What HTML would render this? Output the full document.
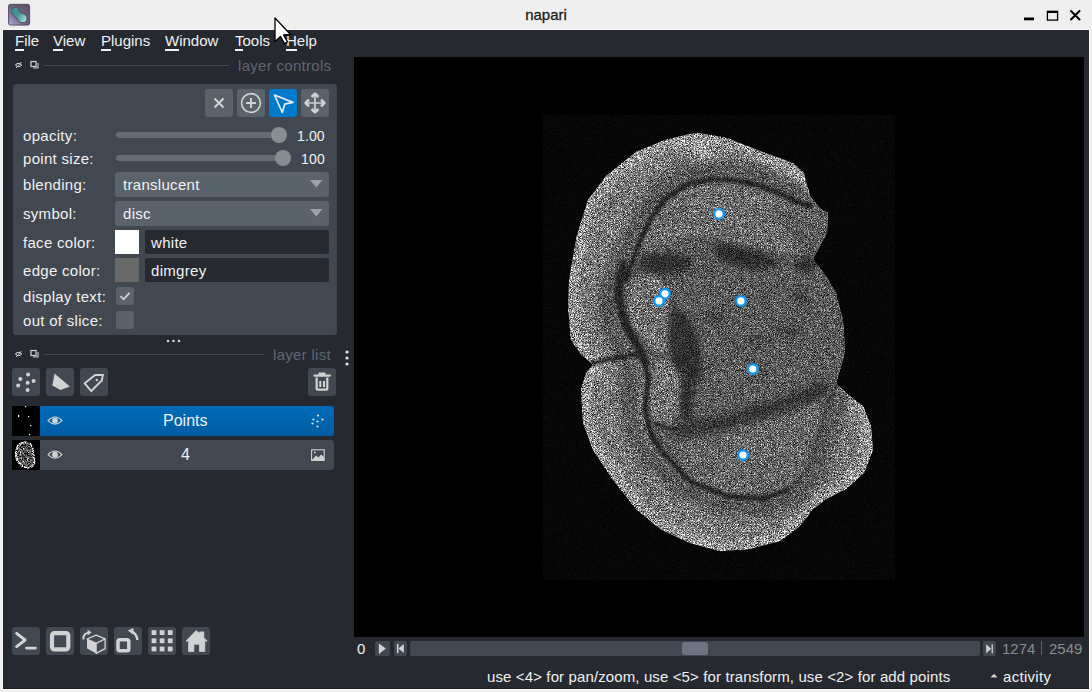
<!DOCTYPE html>
<html><head><meta charset="utf-8">
<style>
*{box-sizing:border-box;margin:0;padding:0}
html,body{width:1092px;height:692px;overflow:hidden;background:#efefef;font-family:"Liberation Sans",sans-serif;}
.a{position:absolute}
.t{position:absolute;white-space:nowrap;line-height:15px;font-size:15px;letter-spacing:0.3px}
.menu{color:#f0f1f2;top:33px;letter-spacing:0}
.menu u{text-decoration:none;border-bottom:2px solid #f0f1f2;padding-bottom:0px}
.btn{position:absolute;background:#414851;border-radius:3px}
.lbl{color:#f0f1f2;left:23px}
.combo{position:absolute;background:#5a626c;border-radius:3px}
.field{position:absolute;background:#262930;border-radius:2px}
svg{position:absolute;overflow:visible}
</style></head><body>
<!-- title bar -->
<svg style="left:8px;top:4px" width="22" height="22" viewBox="0 0 22 22">
<defs><linearGradient id="ig" x1="0" y1="1" x2="1" y2="0"><stop offset="0" stop-color="#b4acdc"/><stop offset="0.45" stop-color="#6e6384"/><stop offset="1" stop-color="#5f5068"/></linearGradient>
<linearGradient id="ig2" x1="0" y1="0" x2="1" y2="0.6"><stop offset="0" stop-color="#2f9ea4"/><stop offset="0.5" stop-color="#4b8d92"/><stop offset="1" stop-color="#8edcdc"/></linearGradient></defs>
<rect x="0.6" y="0.3" width="21" height="20.8" rx="2" fill="url(#ig)" stroke="#4a4058" stroke-width="0.9"/>
<path d="M3.6 7.2 C3.6 4.6 5.5 3.3 7.8 3.3 C10 3.3 11 5 11.3 7 C11.6 8.5 12.5 9.2 14.5 9.5 C17.3 9.9 19 12 19 14.8 C19 17.3 17 18.8 14.5 18.8 C12.3 18.8 11 17.6 10 15.8 C9 14 7.5 13.3 5.8 11.8 C4.5 10.6 3.6 9 3.6 7.2 Z" fill="url(#ig2)" stroke="#3a3344" stroke-width="1"/>
<path d="M3.6 7.2 C3.6 4.6 5.5 3.3 7.8 3.3 C10 3.3 11 5 11.3 7 C11.6 8.5 12.5 9.2 14.5 9.5 C17.3 9.9 19 12 19 14.8 C19 17.3 17 18.8 14.5 18.8 C12.3 18.8 11 17.6 10 15.8 C9 14 7.5 13.3 5.8 11.8 C4.5 10.6 3.6 9 3.6 7.2 Z" fill="none" stroke="#b8a070" stroke-width="0.4" opacity="0.8"/>
</svg>
<div class="t" style="left:0;width:1092px;text-align:center;top:7px;font-size:15px;letter-spacing:0;color:#1e1e1e;-webkit-text-stroke:0.3px #1e1e1e">napari</div>
<svg style="left:1020px;top:8px" width="66" height="16" viewBox="0 0 66 16">
<rect x="4" y="9.5" width="10" height="2.8" fill="#000"/>
<rect x="27.4" y="3.5" width="10.2" height="8.6" fill="none" stroke="#000" stroke-width="1.3"/>
<rect x="27" y="2.8" width="11" height="2.2" fill="#000"/>
<path d="M51 3 L59.5 11.5 M59.5 3 L51 11.5" stroke="#000" stroke-width="2.1" stroke-linecap="round"/>
</svg>
<div class="a" style="left:3px;top:30px;width:1086px;height:659px;background:#262930;border-left:1px solid #1d2027;border-bottom:1px solid #1d2027;box-shadow:0 0 0 1px #fafafa"></div>
<!-- menus -->
<div class="t menu" style="left:15px"><u>F</u>ile</div>
<div class="t menu" style="left:53px"><u>V</u>iew</div>
<div class="t menu" style="left:101px"><u>P</u>lugins</div>
<div class="t menu" style="left:165px"><u>W</u>indow</div>
<div class="t menu" style="left:235px"><u>T</u>ools</div>
<div class="t menu" style="left:286px"><u>H</u>elp</div>

<!-- canvas -->
<div class="a" style="left:354px;top:57px;width:730px;height:580px;background:#000"></div>
<div id="brain"><svg style="left:0;top:0" width="1092" height="692" viewBox="0 0 1092 692">
<defs>
<filter id="bl2" x="-20%" y="-20%" width="140%" height="140%"><feGaussianBlur stdDeviation="2"/></filter>
<filter id="bl3" x="-20%" y="-20%" width="140%" height="140%"><feGaussianBlur stdDeviation="3"/></filter>
<filter id="bl5" x="-30%" y="-30%" width="160%" height="160%"><feGaussianBlur stdDeviation="5"/></filter>
<filter id="tex" x="540" y="110" width="360" height="475" filterUnits="userSpaceOnUse" color-interpolation-filters="sRGB">
<feTurbulence type="fractalNoise" baseFrequency="1.3" numOctaves="1" seed="7" result="n"/>
<feColorMatrix in="n" type="matrix" values="1 0 0 0 0  1 0 0 0 0  1 0 0 0 0  0 0 0 0 1" result="g"/>
<feComponentTransfer in="g" result="c1"><feFuncR type="linear" slope="1.7" intercept="-0.42"/><feFuncG type="linear" slope="1.7" intercept="-0.42"/><feFuncB type="linear" slope="1.7" intercept="-0.42"/></feComponentTransfer>
<feColorMatrix in="n" type="matrix" values="0 1 0 0 0  0 1 0 0 0  0 1 0 0 0  0 0 0 0 1" result="g2"/>
<feComponentTransfer in="g2" result="c2"><feFuncR type="linear" slope="5" intercept="-3.0"/><feFuncG type="linear" slope="5" intercept="-3.0"/><feFuncB type="linear" slope="5" intercept="-3.0"/></feComponentTransfer>
<feComposite in="c1" in2="c2" operator="arithmetic" k1="0" k2="1" k3="1" k4="0" result="c"/>
<feComposite in="SourceGraphic" in2="c" operator="arithmetic" k1="2.0" k2="0" k3="0" k4="0"/>
</filter>
<clipPath id="sil"><path d="M700,133 L727,138 L760,151 L793,163 L804,173 L810,196 L820,208 L828,213 L827,233 L820,246 L813,259 L826,276 L836,293 L843,320 L845,350 L843,360 L836,383 L846,393 L863,406 L871,426 L873,450 L864,473 L846,489 L826,499 L813,509 L800,526 L780,541 L750,549 L720,551 L690,543 L660,529 L636,509 L613,480 L593,450 L583,423 L581,390 L586,373 L593,365 L580,353 L571,340 L568,306 L569,280 L577,235 L588,200 L606,176 L636,152 L665,140 L690,134 Z"/></clipPath>
</defs>
<g filter="url(#tex)">
<rect x="543" y="115" width="352" height="465" fill="#070707"/>
<g clip-path="url(#sil)">
<rect x="540" y="110" width="360" height="475" fill="#808080"/>
<path filter="url(#bl3)" d="M700,133 L727,138 L760,151 L793,163 L804,173 L810,196 M836,383 L846,393 L863,406 L871,426 L873,450 L864,473 L846,489 L826,499 L813,509 L800,526 L780,541 L750,549 L720,551 L690,543 L660,529 L636,509 L613,480 L593,450 L583,423 L581,390 L586,373 L593,365 L580,353 L571,340 L568,306 L569,280 L577,235 L588,200 L606,176 L636,152 L665,140 L690,134 Z" fill="none" stroke="#a2a2a2" stroke-width="20"/>
<!-- inner cortex darker layer -->
<path filter="url(#bl5)" d="M808,197 L795,193 L776,183 L752,175 L732,171 L709,170 L683,175 L657,192 L642,214 L631,238 L621,260 L609,285 L606,305 L613,335 L627,360 L631,382 L629,410 L636,440 L652,464 L684,490 L724,505 L765,508 L796,497 L816,476 L827,445 L838,403 L846,388" fill="none" stroke="#5a5a5a" stroke-width="18" stroke-linejoin="round"/>
<!-- inner region (inside cortex) -->
<path filter="url(#bl2)" d="M811,206 L797,202 L777,192 L753,184 L733,180 L711,179 L687,184 L664,200 L650,220 L640,241 L632,262 L624,285 L620,300 L626,325 L640,352 L646,380 L645,410 L651,435 L663,453 L691,482 L727,496 L763,499 L791,489 L808,470 L818,441 L830,399 L839,382 L860,380 L860,200 Z" fill="#5e5e5e"/>
<!-- upper lens -->
<path filter="url(#bl2)" d="M640,252 L644,232 L652,218 L665,203 L687,188 L711,183 L733,184 L753,188 L777,196 L797,206 L812,212 L826,230 L818,248 L790,252 L765,250 L745,244 L717,238 L690,234 L660,246 Z" fill="#727272"/>
<path filter="url(#bl3)" d="M770,205 L826,222 L835,260 L800,250 Z" fill="#5e5e5e"/>
<!-- small lobe -->
<path filter="url(#bl2)" d="M643,275 L660,279 L667,289 L671,320 L671,350 L655,353 L636,331 L628,308 L630,284 Z" fill="#7a7a7a"/>
<!-- oval -->
<ellipse filter="url(#bl2)" cx="666" cy="392" rx="17" ry="32" fill="#7c7c7c"/>
<!-- bottom lobe -->
<path filter="url(#bl3)" d="M677,432 L715,428 L751,420 L787,408 L822,392 L818,441 L808,470 L791,489 L763,499 L727,496 L691,482 L680,458 Z" fill="#6c6c6c"/>
<!-- dark boundary lines -->
<filter id="bl15" x="-20%" y="-20%" width="140%" height="140%"><feGaussianBlur stdDeviation="1.5"/></filter>
<g filter="url(#bl15)" fill="none" stroke="#222" stroke-linecap="round" stroke-linejoin="round">
<path d="M811,206 L797,202 L777,192 L753,184 L733,180 L711,179 L687,184 L664,200 L650,220 L640,241 L632,262 L626,280" stroke-width="5"/>
<path d="M624,262 L619,296 L629,331 L643,355 L648,379 L645,410 L651,435 L663,453 L691,482 L727,496 L763,499 L791,489" stroke-width="5"/>
<path d="M622,270 L618,296 L625,325 L637,345 L645,362" stroke-width="9" stroke="#282828"/>
<path d="M791,489 L808,470 L818,441 L830,399 L839,382" stroke-width="4" stroke="#444"/>
<path d="M589,364 L620,357 L640,354" stroke-width="4"/>
<path d="M655,424 L672,430 L687,427" stroke-width="3"/>
</g>
<g filter="url(#bl3)" fill="#303030">
<path d="M722,243 L748,248 L770,254 L782,266 L752,270 L725,264 L712,252 Z"/>
<path d="M641,256 L670,252 L694,260 L686,272 L654,274 L639,268 Z"/>
<path d="M670,305 L690,318 L701,345 L701,382 L686,386 L672,362 L668,335 Z"/>
<ellipse cx="687" cy="399" rx="7" ry="25"/>
<ellipse cx="806" cy="265" rx="11" ry="8"/>
<ellipse cx="800" cy="296" rx="10" ry="6" opacity="0.6"/>
<ellipse cx="789" cy="332" rx="12" ry="6" opacity="0.6"/>
<ellipse cx="714" cy="318" rx="10" ry="6" opacity="0.5"/>
<ellipse cx="760" cy="340" rx="14" ry="5" opacity="0.4"/>
</g>
<path filter="url(#bl5)" d="M679,432 L715,425 L751,415 L787,404 L822,389" fill="none" stroke="#333" stroke-width="13" stroke-linecap="round"/>
</g>
</g>
<g stroke="#1196f2" stroke-width="2.4" fill="#fff"><circle cx="719" cy="213.9" r="4.8"/><circle cx="665" cy="293.8" r="4.8"/><circle cx="659" cy="300.9" r="4.8"/><circle cx="740.9" cy="300.9" r="4.8"/><circle cx="752.8" cy="369" r="4.8"/><circle cx="743" cy="455" r="4.8"/></g>
</svg></div>

<!-- layer controls header -->
<svg style="left:14px;top:60px" width="28" height="10" viewBox="0 0 28 10">
<path d="M1.5 5 Q4.5 1.5 7.5 5 Q4.5 8.5 1.5 5Z" fill="none" stroke="#d1d2d4" stroke-width="1.1"/><path d="M2 8 L7.5 2" stroke="#d1d2d4" stroke-width="0.9"/>
<rect x="17" y="1.5" width="5" height="5" fill="none" stroke="#d1d2d4" stroke-width="1.2"/><path d="M19 8 H24 V3" fill="none" stroke="#d1d2d4" stroke-width="1.1"/>
</svg>
<div class="a" style="left:44px;top:65px;width:185px;height:1px;background:#414851"></div>
<div class="t" style="left:238px;top:58px;color:#5f6872">layer controls</div>
<!-- controls box -->
<div class="a" style="left:13px;top:84px;width:324px;height:251px;background:#414851;border-radius:3px"></div>
<div class="btn" style="left:205px;top:89px;width:28px;height:28px;background:#5a626c"></div>
<div class="btn" style="left:237px;top:89px;width:28px;height:28px;background:#5a626c"></div>
<div class="btn" style="left:269px;top:89px;width:28px;height:28px;background:#007acc"></div>
<div class="btn" style="left:301px;top:89px;width:28px;height:28px;background:#5a626c"></div>
<svg style="left:205px;top:89px" width="124" height="28" viewBox="0 0 124 28">
<path d="M9.5 9.5 L18.5 18.5 M18.5 9.5 L9.5 18.5" stroke="#d1d2d4" stroke-width="1.9"/>
<circle cx="46" cy="14" r="9.4" fill="none" stroke="#d1d2d4" stroke-width="1.6"/>
<path d="M46 9 V19 M41 14 H51" stroke="#d1d2d4" stroke-width="1.9"/>
<path d="M69.5 6 L88 13.4 L79.7 15.2 L77.3 23.5 Z" fill="none" stroke="#e8e9ea" stroke-width="1.7" stroke-linejoin="round"/>
<path d="M110 5 V23 M101 14 H119" stroke="#d1d2d4" stroke-width="1.7"/>
<path d="M106.6 8 L110 4.6 L113.4 8 M106.6 20 L110 23.4 L113.4 20 M104 10.6 L100.6 14 L104 17.4 M116 10.6 L119.4 14 L116 17.4" fill="none" stroke="#d1d2d4" stroke-width="2.6" stroke-linecap="butt" stroke-linejoin="round"/>
</svg>

<div class="t lbl" style="top:128px">opacity:</div>
<div class="t lbl" style="top:151px">point size:</div>
<div class="t lbl" style="top:177px">blending:</div>
<div class="t lbl" style="top:206px">symbol:</div>
<div class="t lbl" style="top:235px">face color:</div>
<div class="t lbl" style="top:263px">edge color:</div>
<div class="t lbl" style="top:289px">display text:</div>
<div class="t lbl" style="top:313px">out of slice:</div>

<!-- sliders -->
<div class="a" style="left:116px;top:132px;width:166px;height:6px;background:#636c77;border-radius:3px"></div>
<div class="a" style="left:271px;top:127px;width:16px;height:16px;background:#868e93;border-radius:50%"></div>
<div class="t" style="left:297px;top:129px;font-size:14px;line-height:14px;letter-spacing:0.1px;color:#f0f1f2">1.00</div>
<div class="a" style="left:116px;top:155px;width:170px;height:6px;background:#636c77;border-radius:3px"></div>
<div class="a" style="left:275px;top:150px;width:16px;height:16px;background:#868e93;border-radius:50%"></div>
<div class="t" style="left:301px;top:152px;font-size:14px;line-height:14px;letter-spacing:0.2px;color:#f0f1f2">100</div>

<div class="combo" style="left:115px;top:172px;width:214px;height:25px"></div>
<div class="t" style="left:123px;top:177px;color:#f0f1f2">translucent</div>
<div class="combo" style="left:115px;top:201px;width:214px;height:25px"></div>
<div class="t" style="left:123px;top:206px;color:#f0f1f2">disc</div>
<svg style="left:310px;top:180px" width="13" height="40" viewBox="0 0 13 40">
<path d="M0 0 H12.5 L6.25 7.5Z M0 29 H12.5 L6.25 36.5Z" fill="#9da3a9"/>
</svg>
<div class="a" style="left:115px;top:230px;width:24px;height:24px;background:#fff"></div>
<div class="field" style="left:145px;top:230px;width:184px;height:24px"></div>
<div class="t" style="left:151px;top:235px;color:#f0f1f2">white</div>
<div class="a" style="left:115px;top:258px;width:24px;height:24px;background:#696969"></div>
<div class="field" style="left:145px;top:258px;width:184px;height:24px"></div>
<div class="t" style="left:151px;top:263px;color:#f0f1f2">dimgrey</div>
<div class="combo" style="left:116px;top:287px;width:18px;height:18px"></div>
<svg style="left:116px;top:287px" width="18" height="18" viewBox="0 0 18 18"><path d="M4.5 9.2 L7.6 12.3 L13.5 5.8" fill="none" stroke="#d1d2d4" stroke-width="1.8"/></svg>
<div class="combo" style="left:116px;top:311px;width:18px;height:18px"></div>

<!-- splitter dots -->
<svg style="left:166px;top:339px" width="16" height="4" viewBox="0 0 16 4"><circle cx="2" cy="2" r="1.3" fill="#d1d2d4"/><circle cx="7.5" cy="2" r="1.3" fill="#d1d2d4"/><circle cx="13" cy="2" r="1.3" fill="#d1d2d4"/></svg>

<!-- layer list header -->
<svg style="left:14px;top:349px" width="28" height="10" viewBox="0 0 28 10">
<path d="M1.5 5 Q4.5 1.5 7.5 5 Q4.5 8.5 1.5 5Z" fill="none" stroke="#d1d2d4" stroke-width="1.1"/><path d="M2 8 L7.5 2" stroke="#d1d2d4" stroke-width="0.9"/>
<rect x="17" y="1.5" width="5" height="5" fill="none" stroke="#d1d2d4" stroke-width="1.2"/><path d="M19 8 H24 V3" fill="none" stroke="#d1d2d4" stroke-width="1.1"/>
</svg>
<div class="a" style="left:44px;top:354px;width:220px;height:1px;background:#414851"></div>
<div class="t" style="left:273px;top:347px;color:#5f6872">layer list</div>
<svg style="left:344px;top:349px" width="6" height="18" viewBox="0 0 6 18"><circle cx="3" cy="3" r="1.6" fill="#e0e1e2"/><circle cx="3" cy="9" r="1.6" fill="#e0e1e2"/><circle cx="3" cy="15" r="1.6" fill="#e0e1e2"/></svg>

<div class="btn" style="left:12px;top:368px;width:28px;height:28px"></div>
<div class="btn" style="left:46px;top:368px;width:28px;height:28px"></div>
<div class="btn" style="left:80px;top:368px;width:28px;height:28px"></div>
<div class="btn" style="left:308px;top:368px;width:28px;height:28px"></div>
<svg style="left:12px;top:368px" width="324" height="28" viewBox="0 0 324 28">
<g fill="#d1d2d4"><circle cx="16.1" cy="6.5" r="2"/><circle cx="8.4" cy="10.9" r="2"/><circle cx="21.6" cy="13.1" r="2"/><circle cx="15.6" cy="14.7" r="2"/><circle cx="6.2" cy="17.5" r="2"/><circle cx="15.6" cy="21.9" r="2"/></g>
<path d="M42.5 5.4 L57.9 18.6 L48.5 21.9 L40.3 17.5 Z" fill="#d1d2d4"/>
<path d="M72.7 15.3 L83.2 7 L90.9 7 L89.8 12.5 L79.3 23 Z" fill="none" stroke="#d1d2d4" stroke-width="1.9" stroke-linejoin="miter"/>
<circle cx="84.8" cy="12" r="1.2" fill="#d1d2d4"/>
<path d="M302.5 7.6 H317.9 M307.5 5.7 H312.6" stroke="#d1d2d4" stroke-width="2.2" stroke-linecap="round"/>
<path d="M304.7 9.5 V20.3 Q304.7 21.7 306.1 21.7 H313.9 Q315.3 21.7 315.3 20.3 V9.5" fill="none" stroke="#d1d2d4" stroke-width="2.2"/>
<path d="M308.3 13 V19 M312 13 V19" stroke="#d1d2d4" stroke-width="2"/>
</svg>

<!-- layers -->
<div class="a" style="left:12px;top:406px;width:28px;height:30px;background:#000"></div>
<svg style="left:12px;top:406px" width="28" height="30" viewBox="0 0 28 30"><g fill="#fff"><rect x="13" y="0" width="1.2" height="1.2"/><rect x="6" y="9" width="1.3" height="2"/><rect x="16" y="10" width="1.2" height="1.2"/><rect x="18" y="19" width="1.2" height="1.2"/><rect x="17" y="28" width="1.2" height="1.2"/></g></svg>
<div class="a" style="left:40px;top:406px;width:294px;height:30px;background:linear-gradient(#006cb9,#005ca3);border-radius:0 3px 3px 0"></div>
<div class="a" style="left:12px;top:440px;width:28px;height:30px;background:#000"></div>
<svg style="left:12px;top:440px" width="28" height="30" viewBox="0 0 28 30">
<defs><filter id="tex2" x="0" y="0" width="28" height="30" filterUnits="userSpaceOnUse" color-interpolation-filters="sRGB">
<feTurbulence type="fractalNoise" baseFrequency="1.4" numOctaves="1" seed="3" result="n"/>
<feColorMatrix in="n" type="matrix" values="1 0 0 0 0  1 0 0 0 0  1 0 0 0 0  0 0 0 0 1" result="g"/>
<feComponentTransfer in="g" result="c"><feFuncR type="linear" slope="3" intercept="-1"/><feFuncG type="linear" slope="3" intercept="-1"/><feFuncB type="linear" slope="3" intercept="-1"/></feComponentTransfer>
<feComposite in="SourceGraphic" in2="c" operator="arithmetic" k1="2" k2="0" k3="0" k4="0"/></filter></defs>
<g filter="url(#tex2)"><rect x="0" y="0" width="28" height="30" fill="#000"/>
<path d="M12 2.5 C17 1.5 20.5 5 21 10 C21.5 13 21.3 15 22.5 19 C23.5 24 20 27.5 16 27.5 C10 27.5 5 23 4 16 C3 9 6 3.5 12 2.5Z" fill="#4a4a4a" stroke="#b8b8b8" stroke-width="1.8"/>
<path d="M10 9 C13 7 16 9 16 13 C16 17 17 21 14 22 C11 23 9 19 8.5 15 C8 12 8.5 10 10 9Z" fill="none" stroke="#888" stroke-width="1.4"/>
</g></svg>
<div class="a" style="left:40px;top:440px;width:294px;height:30px;background:#414851;border-radius:0 3px 3px 0"></div>
<svg style="left:40px;top:406px" width="294" height="64" viewBox="0 0 294 64">
<g fill="none" stroke="#d1d2d4" stroke-width="1.1"><path d="M8 14.6 Q15 7.5 22 14.6 Q15 21.7 8 14.6Z"/><path d="M8 48.6 Q15 41.5 22 48.6 Q15 55.7 8 48.6Z"/></g>
<circle cx="15" cy="14.6" r="2.9" fill="#d1d2d4"/><circle cx="15" cy="48.6" r="2.9" fill="#d1d2d4"/>
<g fill="#e6e7e8"><circle cx="278" cy="9.5" r="1.1"/><circle cx="273.5" cy="13.5" r="1.1"/><circle cx="282.5" cy="13.5" r="1.1"/><circle cx="277.5" cy="15.5" r="1.1"/><circle cx="272.5" cy="17.5" r="1.1"/><circle cx="277.5" cy="20.5" r="1.1"/></g>
<rect x="271.6" y="43.8" width="12.6" height="10.6" fill="none" stroke="#d1d2d4" stroke-width="1.1"/>
<path d="M272 54 L276 49.5 L278.5 51.5 L281 48.5 L284 51 V54Z" fill="#d1d2d4"/><circle cx="274.8" cy="46.5" r="0.9" fill="#d1d2d4"/>
</svg>
<div class="t" style="left:163px;top:413px;font-size:16px;line-height:16px;letter-spacing:0;color:#f0f1f2">Points</div>
<div class="t" style="left:181px;top:447px;font-size:16px;line-height:16px;color:#f0f1f2">4</div>

<!-- bottom buttons -->
<div class="btn" style="left:12px;top:627px;width:28px;height:28px"></div>
<div class="btn" style="left:46px;top:627px;width:28px;height:28px"></div>
<div class="btn" style="left:80px;top:627px;width:28px;height:28px"></div>
<div class="btn" style="left:114px;top:627px;width:28px;height:28px"></div>
<div class="btn" style="left:148px;top:627px;width:28px;height:28px"></div>
<div class="btn" style="left:182px;top:627px;width:28px;height:28px"></div>
<svg style="left:12px;top:627px" width="198" height="28" viewBox="0 0 198 28">
<g fill="none" stroke="#d1d2d4" stroke-linecap="round" stroke-linejoin="round">
<path d="M4.6 6.3 L13.1 13 L4.6 19.7" stroke-width="2.9"/>
<path d="M14.5 21.1 H23.4" stroke-width="2.9"/>
<rect x="40" y="6.1" width="16.3" height="16.3" rx="2.5" stroke-width="4.2"/>
<rect x="106" y="12.8" width="10.8" height="10.9" rx="1.8" stroke-width="3.5"/>
</g>
<!-- cube -->
<path d="M75 12 L84.1 16.3 L84.1 26.3 L75 21.6Z" fill="#d1d2d4"/>
<path d="M75 12 L84.1 8.2 L93.1 11.8 L84.1 16.3Z M84.1 16.3 L93.1 11.8 L93.1 21.6 L84.1 26.3Z" fill="none" stroke="#d1d2d4" stroke-width="1.3" stroke-linejoin="round"/>
<path d="M71.5 12.5 Q70.6 7.3 76 5.6" fill="none" stroke="#d1d2d4" stroke-width="2"/>
<path d="M75.5 2.8 L79.5 5.2 L75.8 8.6Z" fill="#d1d2d4"/>
<!-- rotate square arrow -->
<path d="M125.4 13 Q124.6 6.5 119.6 4.3" fill="none" stroke="#d1d2d4" stroke-width="2.4"/>
<path d="M115.8 3.4 L121.6 0.9 L121 7.6Z" fill="#d1d2d4"/>
<!-- grid -->
<g fill="#d1d2d4">
<rect x="139.6" y="3.2" width="4.8" height="4.8"/><rect x="147.7" y="3.2" width="4.8" height="4.8"/><rect x="155.8" y="3.2" width="4.8" height="4.8"/>
<rect x="139.6" y="11.4" width="4.8" height="4.8"/><rect x="147.7" y="11.4" width="4.8" height="4.8"/><rect x="155.8" y="11.4" width="4.8" height="4.8"/>
<rect x="139.6" y="19.6" width="4.8" height="4.8"/><rect x="147.7" y="19.6" width="4.8" height="4.8"/><rect x="155.8" y="19.6" width="4.8" height="4.8"/>
</g>
<!-- home -->
<path d="M184.2 3.5 L174 14 L176.6 14 L176.6 24.4 L181.9 24.4 L181.9 17.3 L187.5 17.3 L187.5 24.4 L192.8 24.4 L192.8 14 L195.2 14 L191.8 10.5 L191.8 4.9 L187.5 4.9 L187.5 6.8 Z" fill="#d1d2d4" stroke="#d1d2d4" stroke-width="0.8" stroke-linejoin="round"/>
</svg>

<!-- dims slider -->
<div class="t" style="left:357px;top:641px;color:#f0f1f2">0</div>
<div class="btn" style="left:375px;top:641px;width:15px;height:15px;border-radius:2px"></div>
<div class="btn" style="left:394px;top:641px;width:13px;height:15px;border-radius:2px"></div>
<div class="a" style="left:410px;top:641px;width:570px;height:15px;background:#414851;border-radius:2px"></div>
<div class="a" style="left:682px;top:642px;width:26px;height:13px;background:#6b7480;border-radius:3px"></div>
<div class="btn" style="left:983px;top:641px;width:13px;height:15px;border-radius:2px"></div>
<svg style="left:375px;top:641px" width="622" height="15" viewBox="0 0 622 15">
<path d="M3.9 2.4 L10.9 7.5 L3.9 13Z" fill="#d1d2d4"/>
<rect x="21.9" y="3" width="1.6" height="9" fill="#d1d2d4"/><path d="M28.8 3 L23.4 7.5 L28.8 11.9Z" fill="#d1d2d4"/>
<path d="M611.2 3.3 L616.2 7.8 L611.2 12.2Z" fill="#d1d2d4"/><rect x="616.6" y="3.3" width="1.3" height="9" fill="#d1d2d4"/>
</svg>
<div class="t" style="left:1002px;top:641px;color:#868e93;letter-spacing:0">1274</div>
<div class="a" style="left:1041px;top:641px;width:1px;height:14px;background:#5a626c"></div>
<div class="t" style="left:1049px;top:641px;color:#868e93;letter-spacing:0">2549</div>

<!-- status -->
<div class="t" style="left:487px;top:669px;color:#f0f1f2;letter-spacing:0.12px">use &lt;4&gt; for pan/zoom, use &lt;5&gt; for transform, use &lt;2&gt; for add points</div>
<svg style="left:990px;top:673px" width="8" height="5" viewBox="0 0 8 5"><path d="M0.5 4.5 L4 0.8 L7.5 4.5Z" fill="#d1d2d4"/></svg>
<div class="t" style="left:1003px;top:669px;color:#f0f1f2">activity</div>

<!-- cursor -->
<svg style="left:274px;top:17px" width="18" height="28" viewBox="0 0 18 28">
<path d="M1 1 L1 24.5 L6.5 19.5 L10.5 26.5 L13.5 25 L9.5 18 L16.5 17.5 Z" fill="#fff" stroke="#000" stroke-width="1.3" stroke-linejoin="round"/>
</svg>
</body></html>
